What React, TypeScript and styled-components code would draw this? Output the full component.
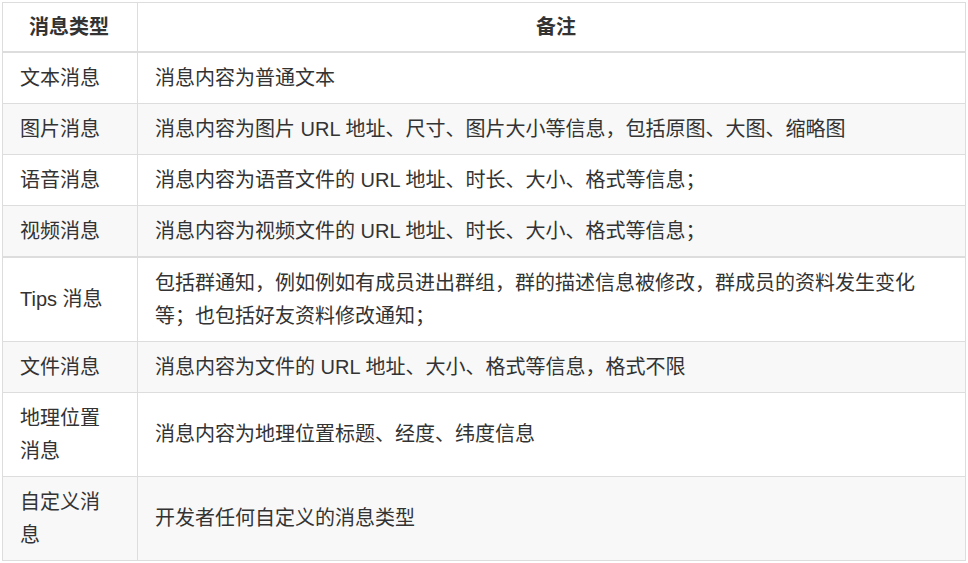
import React from "react";
import styled, { createGlobalStyle } from "styled-components";

const Global = createGlobalStyle`
  body { margin: 0; padding: 2px; background: #fff; }
`;

const Table = styled.table`
  width: 964px;
  border-collapse: collapse;
  font-family: "Liberation Sans", "Noto Sans CJK SC", sans-serif;
  font-size: 20px;
  line-height: 33px;
  color: #333;
`;

const Th = styled.th<{ $w?: number }>`
  border: 1px solid #ddd;
  border-bottom: 2px solid #ddd;
  padding: 8px 17px 7px 26px;
  font-weight: bold;
  text-align: ${(p) => (p.$w ? "left" : "center")};
  width: ${(p) => (p.$w ? `${p.$w}px` : "auto")};
  box-sizing: border-box;
`;

const Tr = styled.tr<{ $gray: boolean; $thick?: boolean }>`
  background: ${(p) => (p.$gray ? "#f8f8f8" : "#fff")};
  border-top: ${(p) => (p.$thick ? "2px solid #ddd" : "none")};
`;

const Td = styled.td<{ $first?: boolean }>`
  border: 1px solid #ddd;
  padding: 8.5px ${(p) => (p.$first ? "20px" : "17px")} 8.5px 17px;
  vertical-align: middle;
`;

const rows: [string, string][] = [
  ["文本消息", "消息内容为普通文本"],
  ["图片消息", "消息内容为图片 URL 地址、尺寸、图片大小等信息，包括原图、大图、缩略图"],
  ["语音消息", "消息内容为语音文件的 URL 地址、时长、大小、格式等信息；"],
  ["视频消息", "消息内容为视频文件的 URL 地址、时长、大小、格式等信息；"],
  ["Tips 消息", "包括群通知，例如例如有成员进出群组，群的描述信息被修改，群成员的资料发生变化等；也包括好友资料修改通知；"],
  ["文件消息", "消息内容为文件的 URL 地址、大小、格式等信息，格式不限"],
  ["地理位置消息", "消息内容为地理位置标题、经度、纬度信息"],
  ["自定义消息", "开发者任何自定义的消息类型"],
];

export default function App() {
  return (
    <>
      <Global />
      <Table>
        <thead>
          <tr>
            <Th $w={135}>消息类型</Th>
            <Th>备注</Th>
          </tr>
        </thead>
        <tbody>
          {rows.map(([a, b], i) => (
            <Tr key={a} $gray={i % 2 === 1} $thick={i === 4}>
              <Td $first>{a}</Td>
              <Td>{b}</Td>
            </Tr>
          ))}
        </tbody>
      </Table>
    </>
  );
}
